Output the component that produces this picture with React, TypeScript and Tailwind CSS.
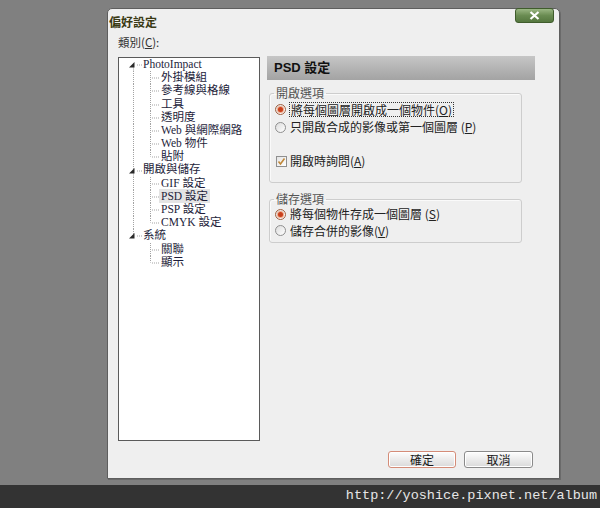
import type { ReactNode } from "react";

const TREE = [
  {
    label: "PhotoImpact",
    children: ["外掛模組", "參考線與格線", "工具", "透明度", "Web 與網際網路", "Web 物件", "貼附"],
  },
  { label: "開啟與儲存", children: ["GIF 設定", "PSD 設定", "PSP 設定", "CMYK 設定"] },
  { label: "系統", children: ["關聯", "顯示"] },
];

const ROW_H = 13.2;
const DOT = { stroke: "#a3a3a3", strokeWidth: 1, strokeDasharray: "1 1" };

function TreeLines({ child, lastTop, firstTop, lastChild }: { child: boolean; lastTop: boolean; firstTop: boolean; lastChild: boolean }) {
  const mid = 6.5;
  if (!child) {
    return (
      <svg width={23} height={ROW_H} className="shrink-0">
        {!firstTop && <line x1={13.5} y1={0} x2={13.5} y2={mid} {...DOT} />}
        {!lastTop && <line x1={13.5} y1={mid} x2={13.5} y2={ROW_H} {...DOT} />}
        <line x1={17} y1={mid + 0.5} x2={22} y2={mid + 0.5} {...DOT} />
        <polygon points="14.5,4 14.5,9.5 9,9.5" fill="#2a2a2a" />
      </svg>
    );
  }
  return (
    <svg width={41} height={ROW_H} className="shrink-0">
      {!lastTop && <line x1={13.5} y1={0} x2={13.5} y2={ROW_H} {...DOT} />}
      <line x1={30.5} y1={0} x2={30.5} y2={lastChild ? mid : ROW_H} {...DOT} />
      <line x1={32} y1={mid + 0.5} x2={40} y2={mid + 0.5} {...DOT} />
    </svg>
  );
}

function Tree() {
  const rows: ReactNode[] = [];
  TREE.forEach((node, ti) => {
    const lastTop = ti === TREE.length - 1;
    rows.push(
      <div key={node.label} className="flex items-center" style={{ height: ROW_H }}>
        <TreeLines child={false} lastTop={lastTop} firstTop={ti === 0} lastChild={false} />
        <span className="whitespace-nowrap">{node.label}</span>
      </div>
    );
    node.children.forEach((c, ci) => {
      const selected = c === "PSD 設定";
      rows.push(
        <div key={c} className="flex items-center" style={{ height: ROW_H }}>
          <TreeLines child lastTop={lastTop} firstTop={false} lastChild={ci === node.children.length - 1} />
          <span className={`whitespace-nowrap -ml-[2px] px-[2px] h-[14px] flex items-center ${selected ? "bg-[#e4e4e4]" : ""}`}>
            {c}
          </span>
        </div>
      );
    });
  });
  return (
    <div className="ml-[10px] w-[142px] h-[384px] bg-white border border-[#5a5a5a] pl-[1px] text-[11.5px] text-[#1d1d3a] [font-family:'Liberation_Serif','Noto_Sans_CJK_TC',serif]">
      {rows}
    </div>
  );
}

function Radio({ checked }: { checked?: boolean }) {
  return (
    <span
      className={`w-[11px] h-[11px] shrink-0 rounded-full border flex items-center justify-center bg-gradient-to-br from-[#dcdcdc] to-white ${
        checked ? "border-[#a0603f]" : "border-[#8f8f8f]"
      }`}
    >
      {checked && <span className="w-[5px] h-[5px] rounded-full bg-[#c8401c] shadow-[0_0_0_1px_#f2a88a]" />}
    </span>
  );
}

function Checkbox() {
  return (
    <span className="w-[11px] h-[11px] shrink-0 border border-[#8f8f8f] bg-gradient-to-br from-[#e4e4e4] to-white flex items-center justify-center">
      <svg width="9" height="9" viewBox="0 0 9 9">
        <path d="M1.5 4.5 L3.5 7 L7.5 1.5" fill="none" stroke="#c0883a" strokeWidth="1.6" />
      </svg>
    </span>
  );
}

function Group({ title, children, className }: { title: string; children: ReactNode; className: string }) {
  return (
    <fieldset className={`ml-[2px] w-[253px] border border-[#cdcdcd] rounded-[3px] shadow-[inset_1px_1px_0_#fafafa] ${className}`}>
      <legend className="ml-[4px] px-[2px] h-[14px] leading-[14px] text-[#555]">{title}</legend>
      {children}
    </fieldset>
  );
}

function Button({ label, primary }: { label: string; primary?: boolean }) {
  return (
    <button
      className={`h-[17px] rounded-[3px] border bg-gradient-to-b from-[#fdfdfd] to-[#dadada] text-[12px] leading-none text-[#1a1a1a] shadow-[inset_0_0_0_1px_#ffffff] ${
        primary ? "w-[68px] border-[#d48c78]" : "w-[69px] border-[#8a8a8a]"
      }`}
    >
      {label}
    </button>
  );
}

export default function App() {
  return (
    <div className="w-[600px] h-[508px] bg-[#808080] flex flex-col [font-family:'Noto_Sans_CJK_TC',sans-serif] text-[12px] text-[#222]">
      <div className="h-[485px] pt-[8px] pl-[107px]">
        <div className="relative w-[453px] h-[471px] bg-[#efefef] border border-[#5e5e5e] rounded-t-[5px] shadow-[1px_1px_0_#6a6a6a] flex flex-col">
          {/* close button */}
          <div className="absolute -top-[1px] right-[5px] w-[39px] h-[15px] rounded-[3px] border border-[#3f5c2c] bg-gradient-to-b from-[#9bb784] via-[#6a8c52] to-[#55773f] flex items-center justify-center">
            <svg width="11" height="9" viewBox="0 0 11 9">
              <path d="M1.5 1 L9.5 8 M9.5 1 L1.5 8" stroke="#ffffff" strokeWidth="2.2" />
            </svg>
          </div>

          <div className="h-[26px] flex items-center pl-[1px] text-[12px] font-bold text-[#3a3a14]">偏好設定</div>
          <div className="h-[16px] flex items-center pl-[10px] text-[11.5px] text-[#333]">
            類別(<u>C</u>):
          </div>

          <div className="mt-[6px] flex">
            <Tree />
            <div className="ml-[7px] w-[268px] flex flex-col">
              <div className="-mt-[1px] h-[24px] bg-gradient-to-b from-[#c6c6c6] to-[#a3a3a3] flex items-center pl-[7px] text-[13px] font-bold text-[#111] [font-family:'Liberation_Sans','Noto_Sans_CJK_TC',sans-serif]">
                PSD 設定
              </div>

              <Group title="開啟選項" className="mt-[6px] pb-[12px]">
                <div className="h-[18px] flex items-center pl-[5px] gap-[3px]">
                  <Radio checked />
                  <span className="border border-dotted border-[#333] px-[1px] leading-[13px]">
                    將每個圖層開啟成一個物件(<u>O</u>)
                  </span>
                </div>
                <div className="h-[18px] flex items-center pl-[5px] gap-[4px]">
                  <Radio />
                  <span>
                    只開啟合成的影像或第一個圖層 (<u>P</u>)
                  </span>
                </div>
                <div className="mt-[16px] h-[18px] flex items-center pl-[6px] gap-[3px]">
                  <Checkbox />
                  <span>
                    開啟時詢問(<u>A</u>)
                  </span>
                </div>
              </Group>

              <Group title="儲存選項" className="mt-[9px] pb-[3px]">
                <div className="h-[16px] flex items-center pl-[5px] gap-[4px]">
                  <Radio checked />
                  <span className="leading-[14px]">
                    將每個物件存成一個圖層 (<u>S</u>)
                  </span>
                </div>
                <div className="h-[17px] flex items-center pl-[5px] gap-[4px]">
                  <Radio />
                  <span className="leading-[14px]">
                    儲存合併的影像(<u>V</u>)
                  </span>
                </div>
              </Group>
            </div>
          </div>

          <div className="mt-[10px] flex justify-end gap-[8px] pr-[26px]">
            <Button label="確定" primary />
            <Button label="取消" />
          </div>
        </div>
      </div>
      <div className="h-[23px] bg-[#333333] flex items-center justify-end pr-[3px] text-[13.5px] text-[#e6e6e6] [font-family:'Liberation_Mono',monospace]">
        http://yoshice.pixnet.net/album
      </div>
    </div>
  );
}
